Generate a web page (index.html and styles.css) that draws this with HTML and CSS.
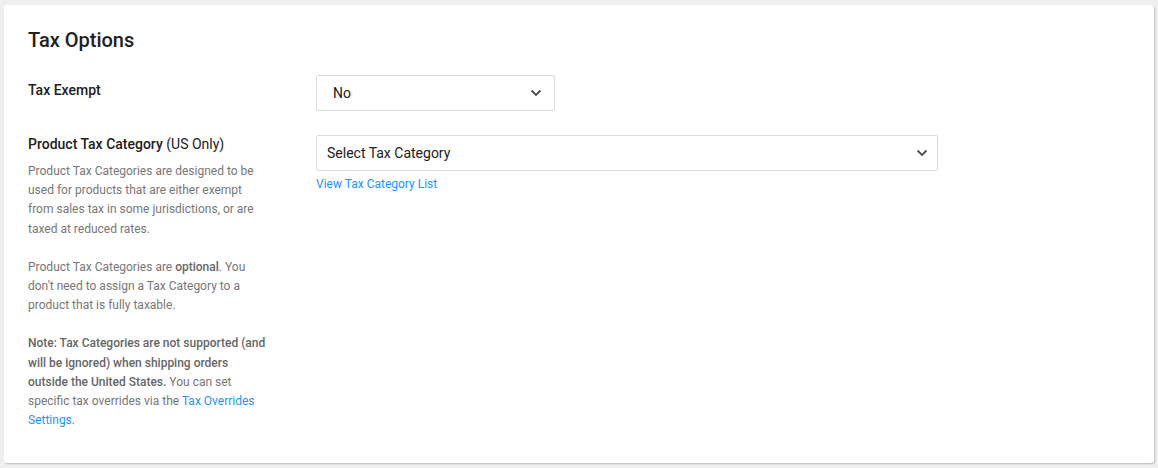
FILE: index.html
```html
<!DOCTYPE html>
<html>
<head>
<meta charset="utf-8">
<link rel="stylesheet" href="styles.css">
</head>
<body>
<div class="card">
  <h2 class="title">Tax Options</h2>
  <div class="row row-exempt">
    <div class="label-col">
      <div class="label">Tax Exempt</div>
    </div>
    <div class="field-col">
      <div class="select select-small">
        <span class="select-text">No</span>
        <svg class="chev" width="12" height="8" viewBox="0 0 12 8"><path d="M1.5 1.5 L6 6 L10.5 1.5" fill="none" stroke="#4a4f55" stroke-width="1.8"/></svg>
      </div>
    </div>
  </div>
  <div class="row">
    <div class="label-col">
      <div class="label">Product Tax Category <span class="label-light">(US Only)</span></div>
      <p class="desc">Product Tax Categories are designed to be used for products that are either exempt from sales tax in some jurisdictions, or are taxed at reduced rates.</p>
      <p class="desc">Product Tax Categories are <strong>optional</strong>. You don't need to assign a Tax Category to a product that is fully taxable.</p>
      <p class="desc"><strong>Note: Tax Categories are not supported (and will be ignored) when shipping orders outside the United States.</strong> You can set specific tax overrides via the <a class="link" href="#">Tax Overrides Settings</a>.</p>
    </div>
    <div class="field-col">
      <div class="select select-wide">
        <span class="select-text">Select Tax Category</span>
        <svg class="chev" width="12" height="8" viewBox="0 0 12 8"><path d="M1.5 1.5 L6 6 L10.5 1.5" fill="none" stroke="#4a4f55" stroke-width="1.8"/></svg>
      </div>
      <a class="link small-link" href="#">View Tax Category List</a>
    </div>
  </div>
</div>
</body>
</html>
```
FILE: styles.css
```css
html, body {
  margin: 0;
  padding: 0;
}
body {
  background: #efefef;
  font-family: Roboto, "Liberation Sans", Arial, sans-serif;
  padding: 5px 4px 0 4px;
  width: 1150px;
  height: 468px;
  box-sizing: content-box;
}
.card {
  background: #fff;
  width: 1150px;
  height: 458px;
  box-sizing: border-box;
  border-radius: 3px;
  box-shadow: 1px 1px 2px rgba(0,0,0,0.22);
  padding: 23px 24px 0 24px;
}
.title {
  margin: 0;
  font-size: 20px;
  font-weight: 500;
  line-height: 24px;
  color: #212121;
}
.row {
  display: grid;
  grid-template-columns: 288px 1fr;
}
.row-exempt {
  margin-top: 23px;
  margin-bottom: 24px;
}
.label-col {
  width: 242px;
}
.label {
  font-size: 14px;
  font-weight: 500;
  color: #212121;
  line-height: 18px;
}
.row-exempt .label {
  padding-top: 6px;
}
.label-light {
  font-weight: 400;
}
.desc {
  margin: 9px 0 19px 0;
  font-size: 12px;
  line-height: 19.2px;
  color: #777;
}
.desc + .desc {
  margin-top: 0;
}
.desc strong {
  font-weight: 500;
  color: #666;
}
.link {
  color: #2196f3;
  text-decoration: none;
}
.select {
  height: 36px;
  box-sizing: border-box;
  border: 1px solid #dcdcdc;
  border-radius: 2px;
  display: flex;
  align-items: center;
  justify-content: space-between;
  color: #212121;
  font-size: 14px;
}
.select-small {
  width: 239px;
  padding: 0 12px 0 16px;
}
.select-wide {
  width: 622px;
  padding: 0 9px 0 10px;
}
.chev {
  display: block;
}
.small-link {
  display: block;
  font-size: 12px;
  line-height: 16px;
  margin-top: 5px;
}
```
